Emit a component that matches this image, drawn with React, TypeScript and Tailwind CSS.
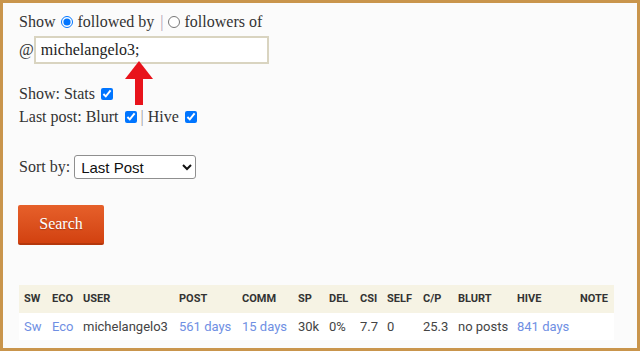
import React, { useState } from "react"

const serif = { fontFamily: '"Liberation Serif", "Times New Roman", serif' }

interface Row {
	sw: string
	eco: string
	user: string
	post: string
	comm: string
	sp: string
	del: string
	csi: string
	self: string
	cp: string
	blurt: string
	hive: string
	note: string
}

const columns = [
	{ key: "sw", label: "SW", w: "w-[28px]" },
	{ key: "eco", label: "ECO", w: "w-[31px]" },
	{ key: "user", label: "USER", w: "w-[96px]" },
	{ key: "post", label: "POST", w: "w-[63px]" },
	{ key: "comm", label: "COMM", w: "w-[56px]" },
	{ key: "sp", label: "SP", w: "w-[31px]" },
	{ key: "del", label: "DEL", w: "w-[31px]" },
	{ key: "csi", label: "CSI", w: "w-[27px]" },
	{ key: "self", label: "SELF", w: "w-[36px]" },
	{ key: "cp", label: "C/P", w: "w-[35px]" },
	{ key: "blurt", label: "BLURT", w: "w-[59px]" },
	{ key: "hive", label: "HIVE", w: "w-[63px]" },
	{ key: "note", label: "NOTE", w: "w-[39px]" },
]

const links = ["sw", "eco", "post", "comm", "hive"]

const rows: Row[] = [
	{
		sw: "Sw",
		eco: "Eco",
		user: "michelangelo3",
		post: "561 days",
		comm: "15 days",
		sp: "30k",
		del: "0%",
		csi: "7.7",
		self: "0",
		cp: "25.3",
		blurt: "no posts",
		hive: "841 days",
		note: "",
	},
]

const App = () => {
	const [mode, setMode] = useState("followed")
	const [user, setUser] = useState("michelangelo3;")

	return (
		<div className="relative min-h-[351px] border-[3px] border-[#c9954c] bg-[#fbfbfb] pl-4 pt-[7px] text-[16px] text-[#333]" style={serif}>
			<div className="flex h-6 items-center leading-6">
				<span>Show</span>
				<input type="radio" name="mode" className="ml-[6px] mr-[4px] h-[12px] w-[12px]" checked={mode === "followed"} onChange={() => setMode("followed")} />
				<span>followed by</span>
				<span className="ml-[6px] mr-[4px] text-[#b3a2b3]">|</span>
				<input type="radio" name="mode" className="mr-[5px] h-[12px] w-[12px]" checked={mode === "followers"} onChange={() => setMode("followers")} />
				<span>followers of</span>
			</div>

			<div className="mt-[2px] flex items-center">
				<span>@</span>
				<input
					type="text"
					value={user}
					onChange={(e) => setUser(e.target.value)}
					className="h-[28px] w-[235px] border-2 border-[#d9d4c0] bg-white px-[5px] text-[16px] text-[#222] outline-none"
					style={serif}
				/>
			</div>

			<div className="mt-[18px] flex items-center leading-[23px]">
				<span>Show: Stats</span>
				<input type="checkbox" defaultChecked className="ml-[6px] h-[12px] w-[12px]" />
			</div>
			<div className="flex items-center leading-[23px]">
				<span>Last post: Blurt</span>
				<input type="checkbox" defaultChecked className="ml-[6px] h-[12px] w-[12px]" />
				<span className="mx-[4px] text-[#999]">|</span>
				<span>Hive</span>
				<input type="checkbox" defaultChecked className="ml-[6px] h-[12px] w-[12px]" />
			</div>

			<div className="mt-[27px] flex h-6 items-center">
				<span className="mr-[4px]">Sort by:</span>
				<select
					className="h-[24px] w-[122px] rounded-[3px] border border-[#8f8f8f] bg-white pl-[2px] text-[15px] text-[#111]"
					style={{ fontFamily: '"Liberation Sans", Arial, sans-serif' }}
					defaultValue="last"
				>
					<option value="last">Last Post</option>
					<option value="user">User</option>
					<option value="sp">SP</option>
				</select>
			</div>

			<button
				className="mt-[26px] ml-[-1px] block h-[40px] w-[86px] rounded-[2px] border-b-2 border-[#b5370c] bg-gradient-to-b from-[#e6602a] to-[#d2410f] text-[16px] text-white [text-shadow:0_1px_1px_rgba(0,0,0,0.25)]"
				style={serif}
			>
				Search
			</button>

			<table className="mt-[40px] w-[595px] table-fixed border-collapse text-left" style={{ fontFamily: "Roboto, Arial, sans-serif" }}>
				<thead>
					<tr className="h-[28px] bg-[#f6f3e4]">
						{columns.map((c) => (
							<th key={c.key} className={`${c.w} pl-[5px] text-[11px] font-bold text-[#333]`}>
								{c.label}
							</th>
						))}
					</tr>
				</thead>
				<tbody>
					{rows.map((r, i) => (
						<tr key={i} className="h-[27px] bg-white">
							{columns.map((c) => (
								<td key={c.key} className={`whitespace-nowrap pl-[5px] text-[13px] ${links.includes(c.key) ? "text-[#6f8fe3]" : "text-[#444]"}`}>
									{r[c.key as keyof Row]}
								</td>
							))}
						</tr>
					))}
				</tbody>
			</table>

			<svg className="absolute left-[122px] top-[58px]" width="28" height="44" viewBox="0 0 28 44">
				<polygon points="0,18 14,0 28,18" fill="#e8131b" />
				<rect x="10" y="17" width="8" height="27" fill="#e8131b" />
			</svg>
		</div>
	)
}

export default App
